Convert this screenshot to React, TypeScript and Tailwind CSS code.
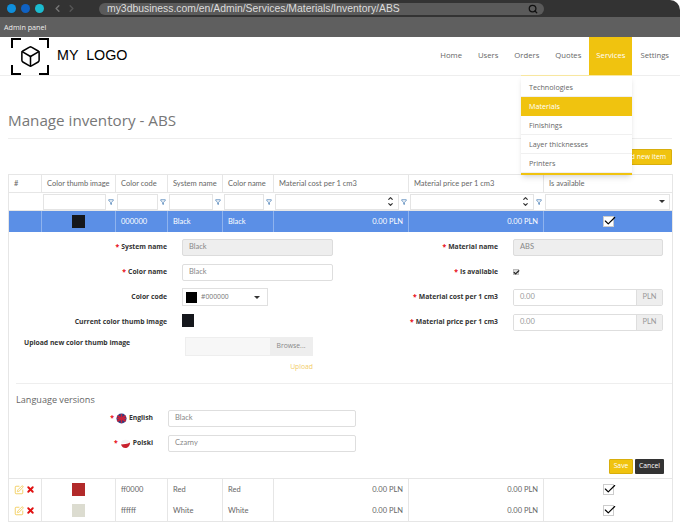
import { ChevronLeft, ChevronRight, Search, Box, SquarePen, X, Check, Filter, ChevronUp, ChevronDown } from 'lucide-react';
import type { ReactNode } from 'react';

const navItems = ['Home', 'Users', 'Orders', 'Quotes', 'Services', 'Settings'];
const menuItems = ['Technologies', 'Materials', 'Finishings', 'Layer thicknesses', 'Printers'];
const headers = ['#', 'Color thumb image', 'Color code', 'System name', 'Color name', 'Material cost per 1 cm3', 'Material price per 1 cm3', 'Is available'];

function Req() {
    return <span className="text-red-600 mr-[2px]">*</span>;
}

function FunnelIcon() {
    return <Filter className="w-[6px] h-[6px] text-[#4a7fb5] shrink-0" strokeWidth={3} />;
}

function Spinner() {
    return (
        <div className="flex flex-col items-center -space-y-[1px]">
            <ChevronUp className="w-[7px] h-[7px] text-[#333]" strokeWidth={4} />
            <ChevronDown className="w-[7px] h-[7px] text-[#333]" strokeWidth={4} />
        </div>
    );
}

function FilterCell({ children, funnel = true }: { children?: ReactNode; funnel?: boolean }) {
    return (
        <td className="border-y border-[#e6e6e6] p-0">
            <div className="flex items-center h-[17px] pl-[1px] pr-[2px] gap-[2px]">
                <div className="flex-1 h-[16px] border border-[#e4e4e4] bg-white flex items-center justify-end pr-[4px]">{children}</div>
                {funnel && <FunnelIcon />}
            </div>
        </td>
    );
}

function CheckBox({ color = 'text-black' }: { color?: string }) {
    return (
        <div className="w-[11px] h-[11px] mx-auto border border-[#ccc] bg-white relative">
            <Check className={`w-[14px] h-[14px] absolute -top-[3px] -left-[1px] ${color}`} strokeWidth={2} />
        </div>
    );
}

function TextField({ value, disabled, className }: { value: string; disabled?: boolean; className: string }) {
    return (
        <div className={`h-[17px] rounded-[2px] border flex items-center px-[6px] text-[#888] font-['Lato',sans-serif] text-[7.5px] ${disabled ? 'bg-[#eeeeee] border-[#dcdcdc]' : 'bg-white border-[#dedede]'} ${className}`}>
            {value}
        </div>
    );
}

function PriceField({ value }: { value: string }) {
    return (
        <div className="w-[150px] h-[17px] rounded-[2px] border border-[#dedede] flex font-['Lato',sans-serif] text-[7.5px] text-[#999] overflow-hidden">
            <div className="flex-1 flex items-center px-[6px] bg-white">{value}</div>
            <div className="w-[26px] flex items-center justify-center bg-[#eeeeee] border-l border-[#dedede]">PLN</div>
        </div>
    );
}

function FormRow({ label, children }: { label: ReactNode; children: ReactNode }) {
    return (
        <div className="flex items-center h-[25px]">
            <div className="w-[158px] text-right font-bold text-[#333] text-[6.8px] shrink-0">{label}</div>
            <div className="ml-[15px] flex-1 flex items-center">{children}</div>
        </div>
    );
}

function FlagEn() {
    return (
        <svg width="11" height="11" viewBox="0 0 12 12" className="inline-block mr-[2px] align-middle">
            <circle cx="6" cy="6" r="5.5" fill="#2b3f86" />
            <path d="M1.5 3 10.5 9M10.5 3 1.5 9" stroke="#c8223a" strokeWidth="2" />
            <path d="M1 6H11M6 1V11" stroke="#c8223a" strokeWidth="1.6" />
        </svg>
    );
}

function FlagPl() {
    return (
        <svg width="11" height="11" viewBox="0 0 12 12" className="inline-block mr-[2px] align-middle">
            <path d="M1 6C1 3 3 2 6 2 9 2 11 3 11 5Z" fill="#f4f4f4" />
            <path d="M1 7C4 7 8 7 11 5 11 8 9 11 6 11 3 11 2 9 1 7Z" fill="#c8202c" />
        </svg>
    );
}

function DataRow({ code, name, swatch }: { code: string; name: string; swatch: string }) {
    return (
        <tr className="text-[#666]">
            <td className="h-[21.5px] border-r border-[#e6e6e6] pl-[5px]">
                <div className="flex items-center gap-[2px]">
                    <SquarePen className="w-[10px] h-[10px] text-[#f0c94d]" strokeWidth={2} />
                    <X className="w-[9px] h-[9px] text-[#e01010]" strokeWidth={5} />
                </div>
            </td>
            <td className="border-r border-[#e6e6e6]">
                <div className={`w-[13px] h-[13px] mx-auto ${swatch}`} />
            </td>
            <td className="border-r border-[#e6e6e6] pl-[5px]">{code}</td>
            <td className="border-r border-[#e6e6e6] pl-[5px]">{name}</td>
            <td className="border-r border-[#e6e6e6] pl-[5px]">{name}</td>
            <td className="border-r border-[#e6e6e6] text-right pr-[5px]">0.00 PLN</td>
            <td className="border-r border-[#e6e6e6] text-right pr-[5px]">0.00 PLN</td>
            <td><CheckBox /></td>
        </tr>
    );
}

export default function App() {
    return (
        <div className="w-[680px] h-[529px] overflow-hidden bg-white font-['Open_Sans',sans-serif] text-[6.8px] relative">
            {/* browser chrome */}
            <div className="h-[17px] bg-[#333333] rounded-tr-[10px] flex items-center pl-[7px]">
                <div className="flex gap-[5px]">
                    <span className="w-[9px] h-[9px] rounded-full bg-[#0f8fdc]" />
                    <span className="w-[9px] h-[9px] rounded-full bg-[#0f62c4]" />
                    <span className="w-[9px] h-[9px] rounded-full bg-[#1bbcd0]" />
                </div>
                <ChevronLeft className="w-[11px] h-[11px] text-[#777] ml-[8px]" strokeWidth={3} />
                <ChevronRight className="w-[11px] h-[11px] text-[#555] ml-[3px]" strokeWidth={3} />
                <div className="ml-[22px] w-[445px] h-[12px] rounded-full bg-[#5a5a5a] flex items-center justify-between pl-[8px] pr-[6px] font-['Liberation_Sans',sans-serif] text-[10.4px] text-[#dddddd]">
                    <span>my3dbusiness.com/en/Admin/Services/Materials/Inventory/ABS</span>
                    <Search className="w-[10px] h-[10px] text-[#111]" strokeWidth={3} />
                </div>
            </div>
            <div className="h-[20px] bg-[#5f5f5f] flex items-center pl-[4px] text-[7.2px] text-[#eeeeee]">Admin panel</div>

            {/* nav */}
            <div className="h-[39px] border-b border-[#eeeeee] flex items-stretch justify-between">
                <div className="flex items-center pl-[11px]">
                    <div className="w-[38px] h-[37px] relative flex items-center justify-center">
                        <span className="absolute top-0 left-0 w-[10px] h-[10px] border-t-2 border-l-2 border-black" />
                        <span className="absolute top-0 right-0 w-[10px] h-[10px] border-t-2 border-r-2 border-black" />
                        <span className="absolute bottom-0 left-0 w-[10px] h-[10px] border-b-2 border-l-2 border-black" />
                        <span className="absolute bottom-0 right-0 w-[10px] h-[10px] border-b-2 border-r-2 border-black" />
                        <Box className="w-[23px] h-[23px] text-black" strokeWidth={1.6} />
                    </div>
                    <span className="ml-[8px] font-['Liberation_Sans',sans-serif] text-[14.3px] text-black whitespace-pre">MY  LOGO</span>
                </div>
                <div className="flex items-stretch pr-[3px] text-[7.7px] text-[#666]">
                    {navItems.map((item) => (
                        <div
                            key={item}
                            className={`flex items-center ${item === 'Services' ? 'px-[7px] bg-[#f0c30f] text-white' : 'px-[8px]'}`}
                        >
                            {item}
                        </div>
                    ))}
                </div>
            </div>

            {/* dropdown */}
            <div className="absolute left-[521px] top-[75px] w-[111px] bg-white border-t border-t-[#f8e7a0] pt-[2px] border-b-2 border-b-[#f0c30f] shadow-md z-10 text-[7.2px] text-[#666]">
                {menuItems.map((item) => (
                    <div
                        key={item}
                        className={`h-[19px] flex items-center pl-[8px] ${item === 'Materials' ? 'bg-[#f0c30f] text-white' : 'border-b border-[#f0f0f0]'}`}
                    >
                        {item}
                    </div>
                ))}
            </div>

            {/* page content */}
            <div className="px-[8px]">
                <div className="h-[63px] border-b border-[#eeeeee] flex items-end pb-[7px]">
                    <h1 className="text-[15.2px] leading-[22px] text-[#777]">Manage inventory - ABS</h1>
                </div>
                <div className="flex justify-end mt-[10px] mb-[9px]">
                    <div className="w-[62px] h-[16px] rounded-[1px] bg-[#f0c30f] border border-[#d8ae0c] text-white flex items-center justify-end pr-[5px]">Add new item</div>
                </div>

                <table className="w-[664px] table-fixed border-collapse border border-[#e6e6e6] font-['Lato',sans-serif] text-[7.5px]">
                    <colgroup>
                        <col className="w-[33px]" />
                        <col className="w-[74px]" />
                        <col className="w-[52px]" />
                        <col className="w-[55px]" />
                        <col className="w-[51px]" />
                        <col className="w-[135px]" />
                        <col className="w-[135px]" />
                        <col className="w-[129px]" />
                    </colgroup>
                    <thead>
                        <tr className="h-[18px] text-[#666] font-normal">
                            {headers.map((h) => (
                                <th key={h} className="border border-[#e6e6e6] font-normal text-left pl-[5px] whitespace-nowrap">{h}</th>
                            ))}
                        </tr>
                        <tr>
                            <td className="border-y border-[#e6e6e6]" />
                            <FilterCell />
                            <FilterCell />
                            <FilterCell />
                            <FilterCell />
                            <FilterCell><Spinner /></FilterCell>
                            <FilterCell><Spinner /></FilterCell>
                            <FilterCell funnel={false}>
                                <span className="w-0 h-0 border-x-[3px] border-x-transparent border-t-[3px] border-t-[#333]" />
                            </FilterCell>
                        </tr>
                    </thead>
                    <tbody>
                        <tr className="h-[21px] bg-[#5b8fe6] text-white">
                            <td className="border-r border-[#8fb3ee]" />
                            <td className="border-r border-[#8fb3ee]">
                                <div className="w-[13px] h-[13px] mx-auto bg-[#15171c]" />
                            </td>
                            <td className="border-r border-[#8fb3ee] pl-[5px]">000000</td>
                            <td className="border-r border-[#8fb3ee] pl-[5px]">Black</td>
                            <td className="border-r border-[#8fb3ee] pl-[5px]">Black</td>
                            <td className="border-r border-[#8fb3ee] text-right pr-[5px]">0.00 PLN</td>
                            <td className="border-r border-[#8fb3ee] text-right pr-[5px]">0.00 PLN</td>
                            <td><CheckBox /></td>
                        </tr>
                        <tr className="border-b border-[#e6e6e6]">
                            <td colSpan={8} className="p-0 h-[247px] align-top font-['Open_Sans',sans-serif] text-[6.8px]">
                                <div className="grid grid-cols-[331px_331px] pt-[3px]">
                                    <div>
                                        <FormRow label={<><Req />System name</>}>
                                            <TextField value="Black" disabled className="w-[151px]" />
                                        </FormRow>
                                        <FormRow label={<><Req />Color name</>}>
                                            <TextField value="Black" className="w-[151px]" />
                                        </FormRow>
                                        <FormRow label="Color code">
                                            <div className="w-[86px] h-[18px] border border-[#e0e0e0] flex items-center pl-[3px] pr-[7px] text-[#777]">
                                                <span className="w-[11px] h-[11px] bg-black mr-[4px]" />
                                                <span className="flex-1">#000000</span>
                                                <span className="w-0 h-0 border-x-[3px] border-x-transparent border-t-[3px] border-t-[#333]" />
                                            </div>
                                        </FormRow>
                                        <FormRow label="Current color thumb image">
                                            <div className="w-[12px] h-[13px] bg-[#15171c] -mt-[4px]" />
                                        </FormRow>
                                    </div>
                                    <div>
                                        <FormRow label={<><Req />Material name</>}>
                                            <TextField value="ABS" disabled className="w-[150px]" />
                                        </FormRow>
                                        <FormRow label={<><Req />Is available</>}>
                                            <div className="w-[6px] h-[6px] bg-[#dddddd] border border-[#bbb] relative">
                                                <Check className="w-[7px] h-[7px] absolute -top-[1px] -left-[1px] text-[#222]" strokeWidth={4} />
                                            </div>
                                        </FormRow>
                                        <FormRow label={<><Req />Material cost per 1 cm3</>}>
                                            <PriceField value="0.00" />
                                        </FormRow>
                                        <FormRow label={<><Req />Material price per 1 cm3</>}>
                                            <PriceField value="0.00" />
                                        </FormRow>
                                    </div>
                                </div>

                                <div className="flex pl-[15px] mt-[2px]">
                                    <div className="w-[161px] font-bold text-[#333] pt-[1px]">Upload new color thumb image</div>
                                    <div className="w-[128px] h-[19px] bg-[#f7f7f7] border border-[#eeeeee] flex justify-end">
                                        <div className="w-[42px] bg-[#eeeeee] flex items-center justify-center text-[#888]">Browse...</div>
                                    </div>
                                </div>
                                <div className="w-[304px] text-right text-[#f3cd6a] mt-[6px] leading-[10px]">Upload</div>

                                <div className="ml-[7px] mt-[11px] border-t border-[#eeeeee] pt-[9px] text-[9.1px] leading-[13px] text-[#666]">Language versions</div>

                                <div className="flex items-center h-[25px]">
                                    <div className="w-[144px] text-right font-bold text-[#333]">
                                        <Req /><FlagEn />English
                                    </div>
                                    <div className="ml-[15px]"><TextField value="Black" className="w-[188px]" /></div>
                                </div>
                                <div className="flex items-center h-[25px]">
                                    <div className="w-[144px] text-right font-bold text-[#333]">
                                        <Req /><FlagPl />Polski
                                    </div>
                                    <div className="ml-[15px]"><TextField value="Czarny" className="w-[188px]" /></div>
                                </div>

                                <div className="flex justify-end gap-[2px] pr-[8px] mt-[3px]">
                                    <div className="w-[24px] h-[15px] bg-[#f0c30f] border border-[#d8ae0c] rounded-[1px] text-white flex items-center justify-center">Save</div>
                                    <div className="w-[29px] h-[15px] bg-[#333333] rounded-[1px] text-white flex items-center justify-center">Cancel</div>
                                </div>
                            </td>
                        </tr>
                        <DataRow code="ff0000" name="Red" swatch="bg-[#b22a2a]" />
                        <DataRow code="ffffff" name="White" swatch="bg-[#dcdcd0]" />
                    </tbody>
                </table>
            </div>
        </div>
    );
}
